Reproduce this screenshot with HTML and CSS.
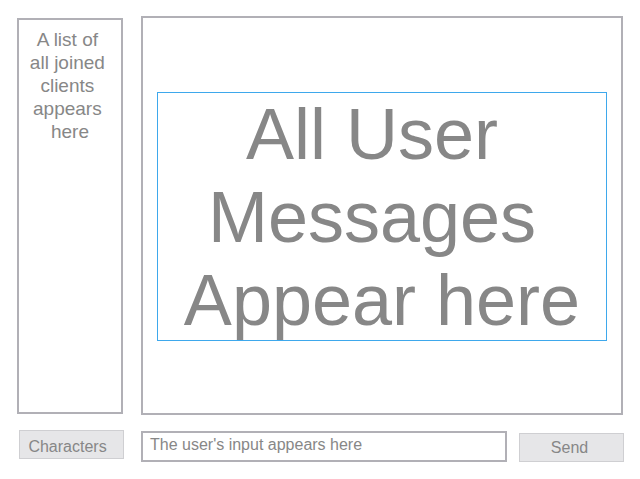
FILE: index.html
```html
<!DOCTYPE html>
<html>
<head>
<meta charset="utf-8">
<link rel="stylesheet" href="styles.css">
</head>
<body>
<div class="app">
  <div class="top">
    <div class="clients">A list of&nbsp;<br>all joined&nbsp;<br>clients&nbsp;<br>appears&nbsp;<br>here</div>
    <div class="messages">
      <div class="msgbox">All User&nbsp;<br>Messages&nbsp;<br>Appear here</div>
    </div>
  </div>
  <div class="bottom">
    <div class="btn chars">Characters</div>
    <div class="input">The user's input appears here</div>
    <div class="btn send">Send</div>
  </div>
</div>
</body>
</html>
```

FILE: styles.css
```css
html, body {
  margin: 0;
  padding: 0;
  background: #ffffff;
  font-family: "Liberation Sans", Arial, sans-serif;
  color: #878787;
}
.app {
  width: 640px;
  height: 479px;
  box-sizing: border-box;
  padding: 16px 0 0 17px;
}
.top {
  display: flex;
  align-items: flex-start;
  gap: 18px;
}
.clients {
  margin-top: 2px;
  width: 106px;
  height: 396px;
  box-sizing: border-box;
  border: 2px solid #b1b0b6;
  padding: 8px 0 0 0;
  font-size: 19px;
  line-height: 23px;
  text-align: center;
}
.messages {
  width: 482px;
  height: 399px;
  box-sizing: border-box;
  border: 2px solid #b1b0b6;
  padding: 74px 14px 0 14px;
}
.msgbox {
  height: 249px;
  box-sizing: border-box;
  border: 1px solid #3ea8ec;
  font-size: 72px;
  line-height: 83px;
  text-align: center;
  padding: 0;
}
.bottom {
  display: flex;
  align-items: flex-start;
  margin-top: 15px;
}
.btn {
  width: 105px;
  height: 29px;
  box-sizing: border-box;
  background: #e6e6e8;
  border: 1px solid #cfcfd2;
  font-size: 16px;
  text-align: center;
}
.chars {
  margin-left: 2px;
  padding: 2px 8px 0 0;
  line-height: 27px;
}
.input {
  margin-left: 17px;
  margin-top: 1px;
  width: 366px;
  height: 31px;
  box-sizing: border-box;
  border: 2px solid #b1b0b6;
  font-size: 16px;
  line-height: 22px;
  padding: 1px 0 0 7px;
}
.send {
  margin-left: 12px;
  margin-top: 3px;
  padding: 0 4px 0 0;
  line-height: 27px;
}
```
